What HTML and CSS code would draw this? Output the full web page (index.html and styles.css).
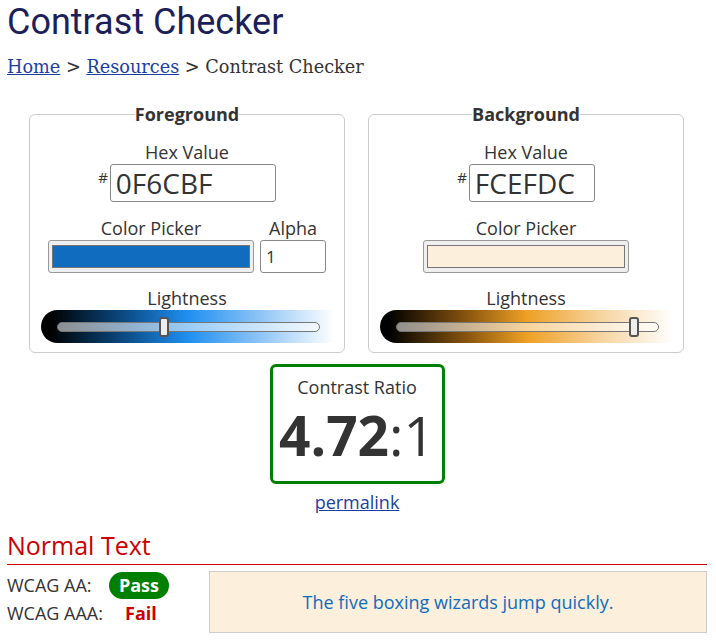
FILE: index.html
```html
<!DOCTYPE html>
<html lang="en">
<head>
    <meta charset="UTF-8">
    <title>Contrast Checker</title>
    <link rel="stylesheet" href="styles.css">
</head>
<body>
    <!-- page heading -->
    <h1 class="page-title">Contrast Checker</h1>
    <div class="crumbs">
        <a href="#">Home</a> &gt; <a href="#">Resources</a> &gt; Contrast Checker
    </div>

    <!-- colour pickers -->
    <div class="pickers">
        <fieldset class="picker">
            <legend>Foreground</legend>
            <div class="field-label first">Hex Value</div>
            <div class="hex-row">
                <span class="hash">#</span>
                <input class="hex-input" type="text" value="0F6CBF">
            </div>
            <div class="picker-row">
                <div class="col">
                    <div class="field-label">Color Picker</div>
                    <div class="swatch"><span class="swatch-fill fg-fill"></span></div>
                </div>
                <div class="col">
                    <div class="field-label">Alpha</div>
                    <input class="alpha-input" type="text" value="1">
                </div>
            </div>
            <div class="field-label">Lightness</div>
            <div class="slider fg-slider">
                <div class="track">
                    <span class="thumb" style="left: 40.7%"></span>
                </div>
            </div>
        </fieldset>

        <fieldset class="picker">
            <legend>Background</legend>
            <div class="field-label first">Hex Value</div>
            <div class="hex-row">
                <span class="hash">#</span>
                <input class="hex-input bg-hex" type="text" value="FCEFDC">
            </div>
            <div class="picker-row">
                <div class="col">
                    <div class="field-label">Color Picker</div>
                    <div class="swatch"><span class="swatch-fill bg-fill"></span></div>
                </div>
            </div>
            <div class="field-label">Lightness</div>
            <div class="slider bg-slider">
                <div class="track">
                    <span class="thumb" style="left: 91%"></span>
                </div>
            </div>
        </fieldset>
    </div>

    <!-- ratio -->
    <div class="ratio-wrap">
        <div class="ratio-box">
            <div class="ratio-label">Contrast Ratio</div>
            <div class="ratio-value"><b>4.72</b>:1</div>
        </div>
        <a href="#" class="permalink">permalink</a>
    </div>

    <!-- results -->
    <h2 class="section-title">Normal Text</h2>
    <div class="results">
        <div class="grades">
            <div class="grade"><span class="grade-name">WCAG AA:</span><span class="badge pass">Pass</span></div>
            <div class="grade"><span class="grade-name">WCAG AAA:</span><span class="badge fail">Fail</span></div>
        </div>
        <div class="sample">The five boxing wizards jump quickly.</div>
    </div>
</body>
</html>
```

FILE: styles.css
```css
* {
    box-sizing: border-box;
}

body {
    margin: 0;
    padding: 0 9px 0 7px;
    background: #fff;
    color: #333;
    font-family: "Open Sans", "Noto Sans", sans-serif;
    font-size: 18px;
    overflow: hidden;
}

/* heading */
.page-title {
    margin: 0;
    padding-top: 1px;
    font-family: Roboto, sans-serif;
    font-weight: 400;
    font-size: 36px;
    line-height: 42px;
    color: #1d1f5b;
}

.crumbs {
    margin-top: 13px;
    font-family: "DejaVu Serif", serif;
    font-size: 17.7px;
    line-height: 22px;
    color: #333;
}

.crumbs a {
    color: #1c3fa0;
}

/* pickers */
.pickers {
    display: flex;
    gap: 23px;
    margin-top: 24px;
    padding-left: 22px;
}

.picker {
    width: 316px;
    margin: 0;
    padding: 0 6px 9px;
    border: 1px solid #ccc;
    border-radius: 6px;
    display: flex;
    flex-direction: column;
    align-items: center;
}

.picker legend {
    font-weight: 700;
    font-size: 18px;
    line-height: 24px;
    text-align: center;
    padding: 0;
    color: #333;
}

.field-label {
    font-size: 18px;
    line-height: 24px;
    text-align: center;
    margin-top: 13px;
}

.field-label.first {
    margin-top: 14px;
}

.picker-row .field-label {
    margin-top: 14px;
}

.hex-row {
    display: flex;
    align-items: flex-start;
}

.hash {
    font-size: 15px;
    line-height: 14px;
    margin: 6px 2px 0 0;
}

.hex-input {
    flex: none;
    width: 166px;
    height: 38px;
    border: 1px solid #888;
    border-radius: 3px;
    padding: 0 5px;
    font-family: "Open Sans", "Noto Sans", sans-serif;
    font-size: 28px;
    color: #333;
}

.bg-hex {
    width: 126px;
}

.picker-row {
    display: flex;
    gap: 6px;
}

.col {
    display: flex;
    flex-direction: column;
    align-items: center;
}

.swatch {
    width: 206px;
    height: 33px;
    padding: 4px 3px;
    background: #efefef;
    border: 1px solid #999;
    border-radius: 3px;
    display: flex;
}

.swatch-fill {
    flex: 1;
    border: 1px solid #767676;
}

.fg-fill {
    background: #0f6cbf;
}

.bg-fill {
    background: #fcefdc;
}

.alpha-input {
    flex: none;
    width: 66px;
    height: 33px;
    border: 1px solid #888;
    border-radius: 3px;
    padding: 0 5px;
    font-family: "Open Sans", "Noto Sans", sans-serif;
    font-size: 17px;
    color: #333;
}

.slider {
    width: 293px;
    height: 33px;
    border-radius: 17px 0 0 17px;
    padding: 0 14px 0 16px;
    display: flex;
    align-items: center;
}

.fg-slider {
    background: linear-gradient(to right, #000 3%, #0c4f8c 30%, #1f8ff0 50%, #8fc5f6 75%, #fff 100%);
}

.bg-slider {
    background: linear-gradient(to right, #000 3%, #8a560e 30%, #eea024 50%, #f6d39e 75%, #fff 100%);
}

.track {
    position: relative;
    flex: 1;
    height: 10px;
    border-radius: 5px;
    background: rgba(255, 255, 255, 0.55);
    border: 1px solid #777;
}

.thumb {
    position: absolute;
    top: -6px;
    width: 10px;
    height: 20px;
    margin-left: -5px;
    background: #eee;
    border: 2px solid #555;
    border-radius: 3px;
}

/* ratio */
.ratio-wrap {
    display: flex;
    flex-direction: column;
    align-items: center;
    margin-top: 11px;
}

.ratio-box {
    width: 175px;
    height: 120px;
    border: 3px solid #008000;
    border-radius: 6px;
    text-align: center;
}

.ratio-label {
    margin-top: 8px;
    line-height: 24px;
}

.ratio-value {
    margin-top: 4px;
    font-size: 55px;
    line-height: 64px;
    color: #333;
}

.ratio-value b {
    font-weight: 700;
}

.permalink {
    margin-top: 6px;
    line-height: 24px;
    color: #1c3fa0;
}

/* results */
.section-title {
    margin: 14px 0 0;
    padding-bottom: 2px;
    font-size: 25px;
    font-weight: 400;
    line-height: 34px;
    color: #c00;
    border-bottom: 1px solid #c00;
}

.results {
    display: flex;
    gap: 40px;
    margin-top: 6px;
}

.grades {
    width: 162px;
}

.grade {
    display: flex;
    align-items: center;
    height: 28px;
}

.grade-name {
    width: 104px;
}

.badge {
    font-weight: 700;
}

.pass {
    background: #008000;
    color: #fff;
    border-radius: 14px;
    padding: 0 10px;
    line-height: 27px;
}

.fail {
    color: #c00;
    margin-left: 14px;
}

.sample {
    flex: 1;
    height: 62px;
    background: #fcefdc;
    border: 1px solid #ccc;
    display: flex;
    align-items: center;
    justify-content: center;
    color: #0f6cbf;
}
```
